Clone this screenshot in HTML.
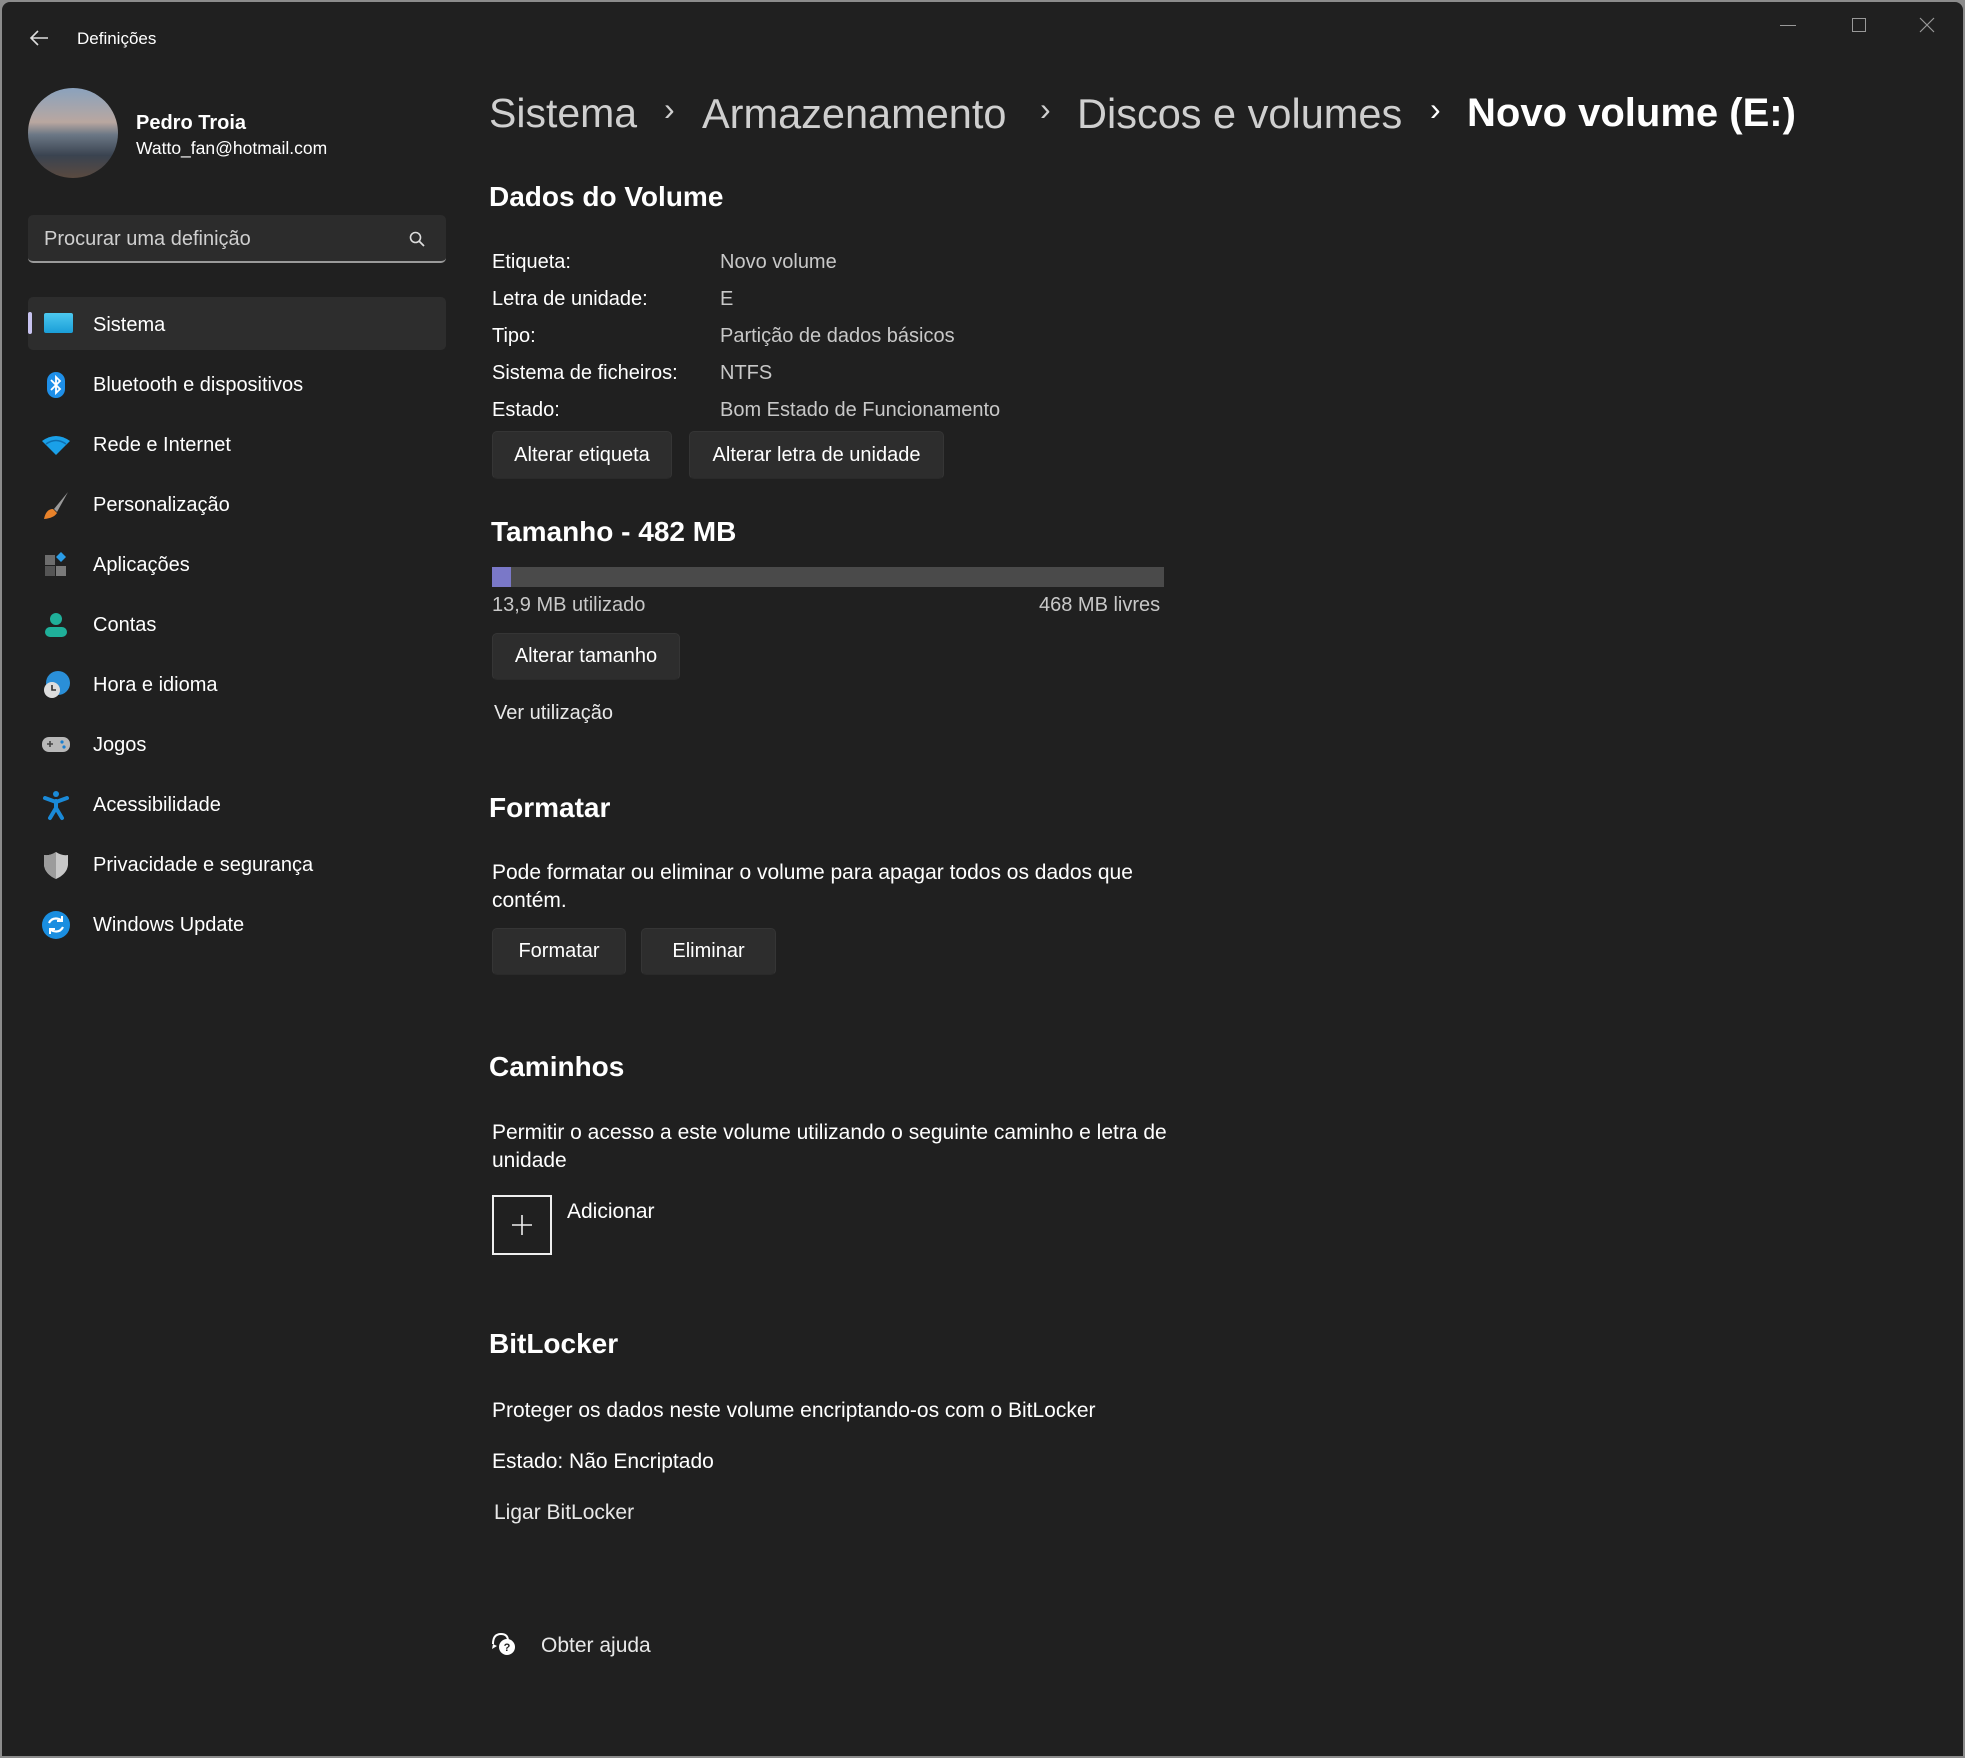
<!DOCTYPE html>
<html><head><meta charset="utf-8">
<style>
*{margin:0;padding:0;box-sizing:border-box}
html,body{width:1965px;height:1758px;overflow:hidden;background:#8c8c8c;font-family:"Liberation Sans",sans-serif;color:#fff}
#win{position:absolute;left:2px;top:2px;width:1961px;height:1754px;background:#202020;border-radius:8px 8px 0 0;overflow:hidden}
.t{position:absolute;white-space:nowrap;line-height:1}
.s20{font-size:20px}
.p21{font-size:21px}
.g{color:#c8c8c8}
.btn{position:absolute;background:#2d2d2d;border:1px solid #353535;border-bottom-color:#2a2a2a;border-radius:5px;font-size:20px;display:flex;align-items:center;justify-content:center;color:#fff}
h2{position:absolute;font-size:28px;font-weight:bold;line-height:1;white-space:nowrap}
.nav{position:absolute;left:91px;font-size:20px;line-height:1}
.ic{position:absolute;left:38px;width:32px;height:32px}
</style></head><body>
<div id="win">
<svg style="position:absolute;left:26px;top:27px" width="22" height="18" viewBox="0 0 22 18"><path d="M10 2 L3 9 L10 16 M3 9 H20" stroke="#ddd" stroke-width="1.6" fill="none"/></svg>
<div class="t" style="left:75px;top:28px;font-size:17px">Definições</div>
<div style="position:absolute;left:1778px;top:23px;width:16px;height:1px;background:#999"></div>
<div style="position:absolute;left:1850px;top:16px;width:14px;height:14px;border:1px solid #999"></div>
<svg style="position:absolute;left:1917px;top:15px" width="16" height="16"><path d="M1 1L15 15M15 1L1 15" stroke="#999" stroke-width="1.2"/></svg>

<div style="position:absolute;left:26px;top:86px;width:90px;height:90px;border-radius:50%;background:linear-gradient(180deg,#8aa2bd 0%,#b9a7a0 38%,#6b7785 52%,#3a4350 75%,#5a4a40 100%)"></div>
<div class="t" style="left:134px;top:111px;font-size:20px;font-weight:bold">Pedro Troia</div>
<div class="t" style="left:134px;top:138px;font-size:17.5px">Watto_fan@hotmail.com</div>

<div style="position:absolute;left:26px;top:213px;width:418px;height:48px;background:#2c2c2c;border-radius:5px;border-bottom:2px solid #9a9a9a"></div>
<div class="t g" style="left:42px;top:227px;font-size:20px;color:#cfcfcf">Procurar uma definição</div>
<svg style="position:absolute;left:406px;top:228px" width="18" height="18"><circle cx="7.5" cy="7.5" r="5" stroke="#ddd" stroke-width="1.6" fill="none"/><path d="M11 11L16 16" stroke="#ddd" stroke-width="1.8"/></svg>

<div style="position:absolute;left:26px;top:295px;width:418px;height:53px;background:#2d2d2d;border-radius:5px"></div>
<div style="position:absolute;left:26px;top:310px;width:4px;height:22px;background:#c8c3f0;border-radius:2px"></div>
<div style="position:absolute;left:42px;top:311px;width:29px;height:20px;background:linear-gradient(#4cc8ef,#1a9ed8);border-radius:2px"></div>
<div class="nav" style="top:313px">Sistema</div>

<svg class="ic" style="top:367px" viewBox="0 0 32 32"><rect x="7" y="3" width="18" height="26" rx="9" fill="#1e8fe8"/><path d="M11 11l9 9-4 4V8l4 4-9 9" stroke="#fff" stroke-width="1.8" fill="none"/></svg>
<div class="nav" style="top:373px">Bluetooth e dispositivos</div>

<svg class="ic" style="top:427px" viewBox="0 0 32 32"><path d="M2 12 Q16 2 30 12 L16 26Z" fill="#1aa0e8"/><path d="M6 15 Q16 8 26 15" stroke="#0d6fb0" stroke-width="1.5" fill="none"/></svg>
<div class="nav" style="top:433px">Rede e Internet</div>

<svg class="ic" style="top:487px" viewBox="0 0 32 32"><path d="M28 3 L14 20 L17 23 Z" fill="#9a9a9a"/><path d="M13 20 Q6 20 4 30 Q14 29 17 24Z" fill="#e8822a"/></svg>
<div class="nav" style="top:493px">Personalização</div>

<svg class="ic" style="top:547px" viewBox="0 0 32 32"><rect x="5" y="6" width="10" height="10" fill="#6d6d6d"/><rect x="5" y="17" width="10" height="10" fill="#555"/><rect x="16" y="17" width="10" height="10" fill="#7a7a7a"/><path d="M21 3 L26 8 L21 13 L16 8Z" fill="#2a9de8"/></svg>
<div class="nav" style="top:553px">Aplicações</div>

<svg class="ic" style="top:607px" viewBox="0 0 32 32"><circle cx="16" cy="10" r="6" fill="#1fb09a"/><rect x="5" y="18" width="22" height="10" rx="5" fill="#1fb09a"/></svg>
<div class="nav" style="top:613px">Contas</div>

<svg class="ic" style="top:667px" viewBox="0 0 32 32"><circle cx="18" cy="14" r="12" fill="#2a8fd8"/><circle cx="12" cy="21" r="8" fill="#ddd"/><path d="M12 16v5h4" stroke="#333" stroke-width="1.6" fill="none"/></svg>
<div class="nav" style="top:673px">Hora e idioma</div>

<svg class="ic" style="top:727px" viewBox="0 0 32 32"><rect x="2" y="8" width="28" height="15" rx="7" fill="#b8b8b8"/><path d="M7 15h6M10 12v6" stroke="#444" stroke-width="1.6"/><circle cx="22" cy="13" r="1.6" fill="#1a7fd0"/><circle cx="24" cy="18" r="1.6" fill="#1a7fd0"/></svg>
<div class="nav" style="top:733px">Jogos</div>

<svg class="ic" style="top:787px" viewBox="0 0 32 32"><circle cx="16" cy="5" r="3" fill="#1a8ad8"/><path d="M5 9 L16 13 L27 9 M16 12 V20 M16 19 L10 29 M16 19 L22 29" stroke="#1a8ad8" stroke-width="4" fill="none" stroke-linecap="round"/></svg>
<div class="nav" style="top:793px">Acessibilidade</div>

<svg class="ic" style="top:847px" viewBox="0 0 32 32"><path d="M16 3 Q22 7 28 6 V16 Q27 25 16 30 Q5 25 4 16 V6 Q10 7 16 3Z" fill="#c8c8c8"/><path d="M16 3 V30 Q5 25 4 16 V6 Q10 7 16 3Z" fill="#9c9c9c"/></svg>
<div class="nav" style="top:853px">Privacidade e segurança</div>

<svg class="ic" style="top:907px" viewBox="0 0 32 32"><circle cx="16" cy="16" r="14" fill="#1a8ee0"/><path d="M9 14 Q12 8 19 10 L21 11 M23 18 Q20 24 13 22 L11 21" stroke="#fff" stroke-width="2.2" fill="none"/><path d="M22 7v5h-5" stroke="#fff" stroke-width="2" fill="none"/><path d="M10 25v-5h5" stroke="#fff" stroke-width="2" fill="none"/></svg>
<div class="nav" style="top:913px">Windows Update</div>

<div class="t" style="left:487px;top:91px;font-size:41px;color:#cfcfcf">Sistema</div>
<div class="t" style="left:662px;top:91px;font-size:32px;color:#cfcfcf">›</div>
<div class="t" style="left:700px;top:91px;font-size:41.5px;color:#cfcfcf">Armazenamento</div>
<div class="t" style="left:1038px;top:91px;font-size:32px;color:#cfcfcf">›</div>
<div class="t" style="left:1075px;top:91px;font-size:41.5px;color:#cfcfcf">Discos e volumes</div>
<div class="t" style="left:1428px;top:91px;font-size:32px;color:#fff">›</div>
<div class="t" style="left:1465px;top:91px;font-size:40px;font-weight:bold">Novo volume (E:)</div>

<h2 style="left:487px;top:181px">Dados do Volume</h2>
<div class="t s20" style="left:490px;top:250px">Etiqueta:</div><div class="t s20 g" style="left:718px;top:250px">Novo volume</div>
<div class="t s20" style="left:490px;top:287px">Letra de unidade:</div><div class="t s20 g" style="left:718px;top:287px">E</div>
<div class="t s20" style="left:490px;top:324px">Tipo:</div><div class="t s20 g" style="left:718px;top:324px">Partição de dados básicos</div>
<div class="t s20" style="left:490px;top:361px">Sistema de ficheiros:</div><div class="t s20 g" style="left:718px;top:361px">NTFS</div>
<div class="t s20" style="left:490px;top:398px">Estado:</div><div class="t s20 g" style="left:718px;top:398px">Bom Estado de Funcionamento</div>
<div class="btn" style="left:490px;top:429px;width:180px;height:48px">Alterar etiqueta</div>
<div class="btn" style="left:687px;top:429px;width:255px;height:48px">Alterar letra de unidade</div>

<h2 style="left:489px;top:516px">Tamanho - 482 MB</h2>
<div style="position:absolute;left:490px;top:565px;width:672px;height:20px;background:#4a4a4a"></div>
<div style="position:absolute;left:490px;top:565px;width:19px;height:20px;background:#7a78c8"></div>
<div class="t s20 g" style="left:490px;top:593px">13,9 MB utilizado</div>
<div class="t s20 g" style="left:1037px;top:593px">468 MB livres</div>
<div class="btn" style="left:490px;top:631px;width:188px;height:47px">Alterar tamanho</div>
<div class="t s20" style="left:492px;top:701px;color:#e8e8e8">Ver utilização</div>

<h2 style="left:487px;top:792px">Formatar</h2>
<div class="t p21" style="left:490px;top:860px">Pode formatar ou eliminar o volume para apagar todos os dados que</div>
<div class="t p21" style="left:490px;top:888px">contém.</div>
<div class="btn" style="left:490px;top:926px;width:134px;height:47px">Formatar</div>
<div class="btn" style="left:639px;top:926px;width:135px;height:47px">Eliminar</div>

<h2 style="left:487px;top:1051px">Caminhos</h2>
<div class="t p21" style="left:490px;top:1120px">Permitir o acesso a este volume utilizando o seguinte caminho e letra de</div>
<div class="t p21" style="left:490px;top:1148px">unidade</div>
<div style="position:absolute;left:490px;top:1193px;width:60px;height:60px;border:2px solid #eee"></div>
<svg style="position:absolute;left:508px;top:1211px" width="24" height="24"><path d="M12 2V22M2 12H22" stroke="#eee" stroke-width="1.6"/></svg>
<div class="t p21" style="left:565px;top:1199px">Adicionar</div>

<h2 style="left:487px;top:1328px">BitLocker</h2>
<div class="t p21" style="left:490px;top:1398px">Proteger os dados neste volume encriptando-os com o BitLocker</div>
<div class="t p21" style="left:490px;top:1449px">Estado: Não Encriptado</div>
<div class="t p21" style="left:492px;top:1500px;color:#e8e8e8">Ligar BitLocker</div>

<svg style="position:absolute;left:488px;top:1628px" width="28" height="28" viewBox="0 0 28 28"><path d="M3 14 Q3 4 11 4 Q18 4 18 11" stroke="#fff" stroke-width="2" fill="none"/><path d="M3 14 L2 19 L7 16" fill="#fff"/><circle cx="17" cy="17" r="8" fill="#fff"/><text x="17" y="21" font-size="11" text-anchor="middle" fill="#202020" font-family="Liberation Sans" font-weight="bold">?</text></svg>
<div class="t p21" style="left:539px;top:1633px;color:#e8e8e8">Obter ajuda</div>
</div>
</body></html>
